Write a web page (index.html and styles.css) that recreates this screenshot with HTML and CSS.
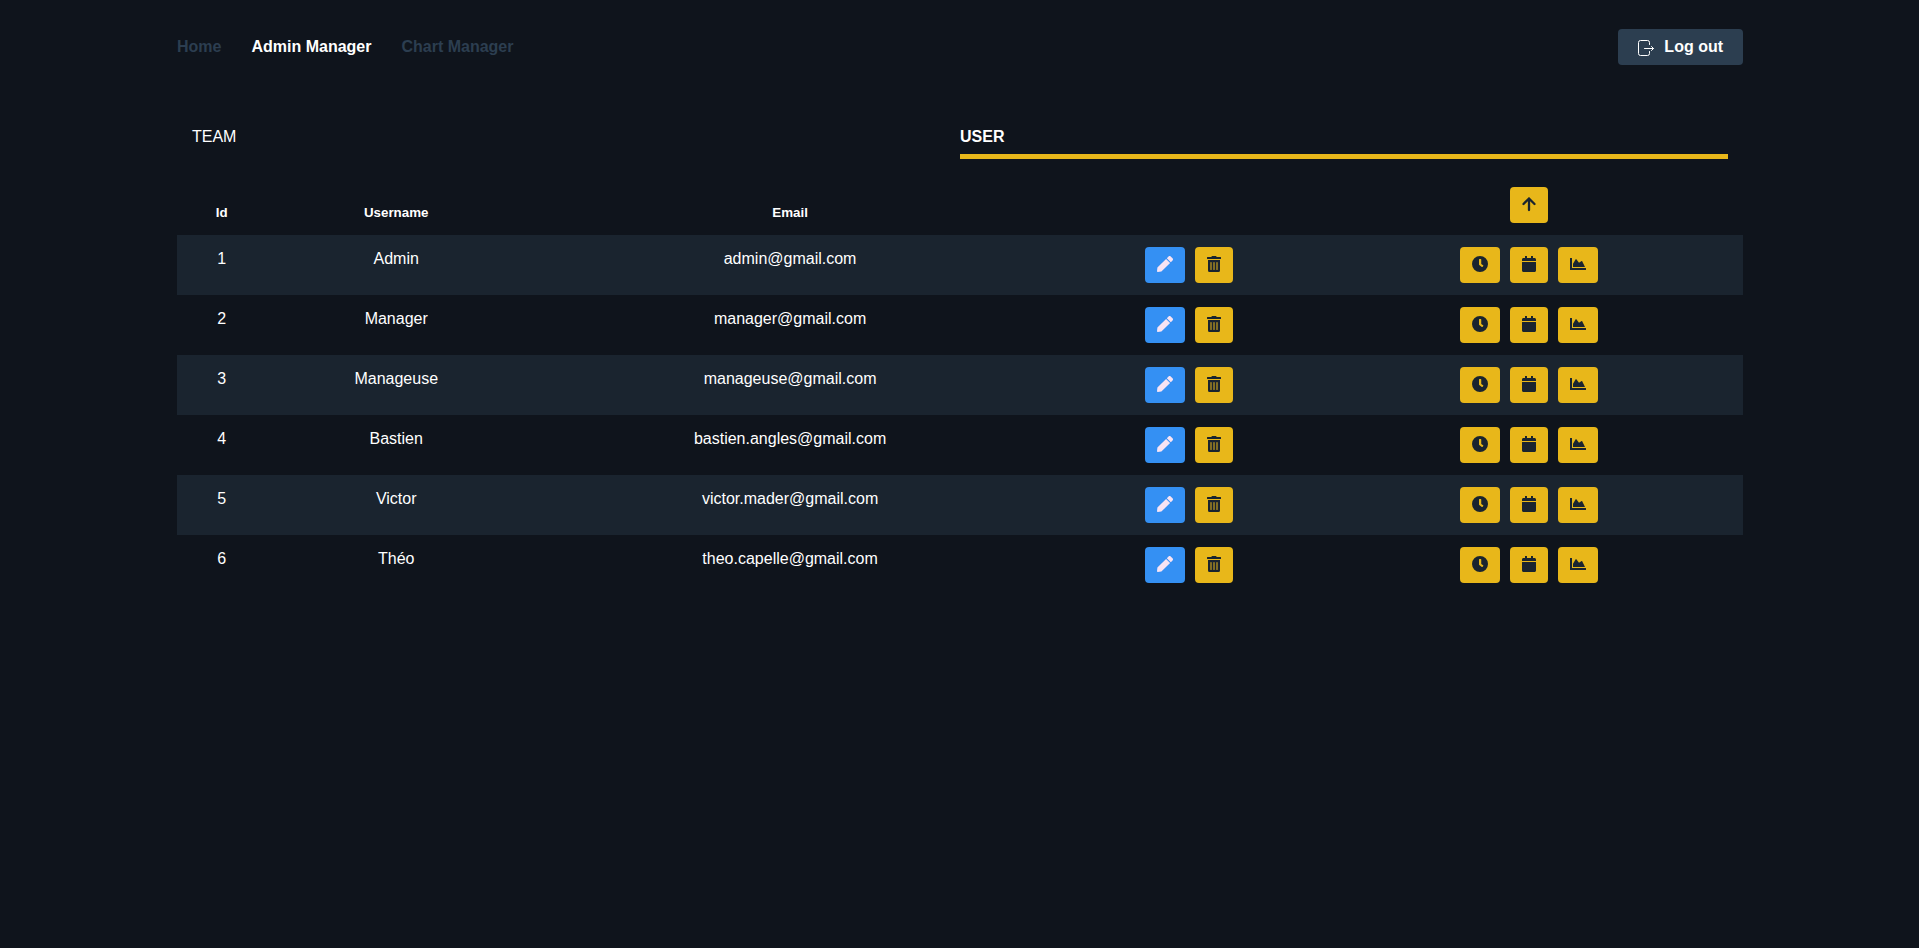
FILE: index.html
```html
<!DOCTYPE html>
<html lang="en">
<head>
<meta charset="utf-8">
<title>Admin Manager</title>
<link rel="stylesheet" href="styles.css">
</head>
<body>
<svg class="sprite" aria-hidden="true">
  <symbol id="i-pen" viewBox="0 0 512 512"><path d="M290.74 93.24l128.02 128.02-277.99 277.99-114.14 12.6C11.35 513.54-1.56 500.62.14 485.34l12.7-114.22 277.9-277.88zm207.2-19.06l-60.11-60.11c-18.75-18.75-49.16-18.75-67.91 0l-56.55 56.55 128.02 128.02 56.55-56.55c18.75-18.76 18.75-49.16 0-67.91z"/></symbol>
  <symbol id="i-trash" viewBox="0 0 448 512"><path d="M32 464a48 48 0 0 0 48 48h288a48 48 0 0 0 48-48V128H32zm272-256a16 16 0 0 1 32 0v224a16 16 0 0 1-32 0zm-96 0a16 16 0 0 1 32 0v224a16 16 0 0 1-32 0zm-96 0a16 16 0 0 1 32 0v224a16 16 0 0 1-32 0zM432 32H312l-9.4-18.7A24 24 0 0 0 281.1 0H166.8a23.72 23.72 0 0 0-21.4 13.3L136 32H16A16 16 0 0 0 0 48v32a16 16 0 0 0 16 16h416a16 16 0 0 0 16-16V48a16 16 0 0 0-16-16z"/></symbol>
  <symbol id="i-clock" viewBox="0 0 512 512"><path d="M256 0a256 256 0 1 1 0 512A256 256 0 1 1 256 0zM224 108V270c0 8 4 15 10 19l82 62c8 6 18 4 24-4l20-26c6-8 4-18-4-24L296 252V108c0-8-6-14-14-14h-44c-8 0-14 6-14 14z"/></symbol>
  <symbol id="i-calendar" viewBox="0 0 448 512"><path d="M12 192h424c6.6 0 12 5.4 12 12v260c0 26.5-21.5 48-48 48H48c-26.5 0-48-21.5-48-48V204c0-6.6 5.4-12 12-12zm436-44v-36c0-26.5-21.5-48-48-48h-48V12c0-6.6-5.4-12-12-12h-40c-6.6 0-12 5.4-12 12v52H160V12c0-6.6-5.4-12-12-12h-40c-6.6 0-12 5.4-12 12v52H48C21.5 64 0 85.5 0 112v36c0 6.6 5.4 12 12 12h424c6.6 0 12-5.4 12-12z"/></symbol>
  <symbol id="i-chart" viewBox="0 0 512 512"><path d="M500 384c6.6 0 12 5.4 12 12v40c0 6.6-5.4 12-12 12H12c-6.6 0-12-5.4-12-12V76c0-6.6 5.4-12 12-12h40c6.6 0 12 5.4 12 12v308h436zM372.7 159.5L288 216l-85.3-113.7c-5.1-6.8-15.5-6.3-19.9 1L96 248v104h384l-89.9-187.8c-3.2-6.5-11.4-8.7-17.4-4.7z"/></symbol>
  <symbol id="i-up" viewBox="0 0 14 16"><path d="M1.500 8L7 2.500L12.500 8M7 2.500V14" fill="none" stroke="currentColor" stroke-width="2.300" stroke-linecap="round" stroke-linejoin="round"/></symbol>
</svg>

<header class="topbar">
  <nav class="nav">
    <a href="#">Home</a>
    <a href="#" class="active">Admin Manager</a>
    <a href="#">Chart Manager</a>
  </nav>
  <button class="logout" type="button">
    <svg class="logout-icon" viewBox="0 0 16 16" aria-hidden="true"><path d="M11.500 4.500V2.500A2 2 0 0 0 9.500 .5H2.500A2 2 0 0 0 .5 2.500v11A2 2 0 0 0 2.500 15.500h7a2 2 0 0 0 2-2v-2M6.500 8.500h9M13.500 6.500l2 2-2 2"/></svg>
    <span>Log out</span>
  </button>
</header>

<main class="content">
  <div class="tabs" role="tablist">
    <button class="tab" type="button" role="tab" aria-selected="false">TEAM</button>
    <button class="tab selected" type="button" role="tab" aria-selected="true">USER</button>
  </div>

  <table class="users">
    <colgroup><col class="col-id"><col class="col-name"><col class="col-email"><col class="col-edit"><col class="col-links"></colgroup>
    <thead>
      <tr>
        <th scope="col">Id</th><th scope="col">Username</th><th scope="col">Email</th><td></td>
        <td class="links"><div class="actions"><button class="btn" type="button" aria-label="Promote"><svg class="narrow"><use href="#i-up"/></svg></button></div></td>
      </tr>
    </thead>
    <tbody id="rows"></tbody>
  </table>
</main>
<script src="app.js"></script>
</body>
</html>
```

FILE: styles.css
```css
* {
  box-sizing: border-box;
}

body {
  margin: 0;
  min-height: 100vh;
  padding: 29px 176px 0 177px;
  background: #0f141c;
  color: #fff;
  font: 16px/24px "Liberation Sans", Arial, sans-serif;
}

button {
  border: 0;
  color: inherit;
  font: inherit;
  cursor: pointer;
}

.sprite {
  display: none;
}

.topbar {
  display: flex;
  align-items: center;
  justify-content: space-between;
}

.nav {
  display: flex;
  gap: 30px;
  font-weight: 700;
}

.nav a {
  color: #2c3e50;
  text-decoration: none;
}

.nav .active {
  color: #fff;
}

.logout {
  display: flex;
  align-items: center;
  gap: 10px;
  height: 36px;
  padding: 0 20px;
  border-radius: 4px;
  background: #2c3e50;
  font-weight: 700;
}

.logout-icon {
  width: 16px;
  height: 16px;
  margin-top: 2px;
  fill: none;
  stroke: #fff;
  stroke-linecap: round;
  stroke-linejoin: round;
}

.tabs {
  display: flex;
  padding: 0 15px;
  margin-top: 60px;
}

.tab {
  flex: 1;
  padding: 0 0 5px;
  border-bottom: 5px solid transparent;
  background: none;
  text-align: left;
}

.tab.selected {
  border-color: #e8b71a;
  font-weight: 700;
}

.users {
  width: 100%;
  margin-top: 16px;
  border-collapse: collapse;
  table-layout: fixed;
  text-align: center;
}

.col-id { width: 5.7%; }
.col-name { width: 16.6%; }
.col-email { width: 33.7%; }
.col-edit { width: 17.3%; }

.users th {
  padding: 16px 0 0;
  font-size: smaller;
}

.users td {
  padding: 12px 0;
  vertical-align: top;
}

.users td.links {
  padding-right: 10px;
}

.users tbody tr:nth-child(odd) {
  background: #1a242f;
}

.actions {
  display: flex;
  justify-content: center;
  gap: 10px;
}

.btn {
  display: flex;
  align-items: center;
  height: 36px;
  padding: 0 12px;
  border-radius: 4px;
  background: #e8b71a;
  color: #1a242f;
}

.btn svg {
  width: 16px;
  height: 16px;
  margin-bottom: 2px;
  fill: currentColor;
}

.btn svg.narrow {
  width: 14px;
}

.btn.edit {
  background: #3490f3;
  color: #f7e3f3;
}
```

FILE: app.js
```js
const users = [
  ["Admin", "admin@gmail.com"],
  ["Manager", "manager@gmail.com"],
  ["Manageuse", "manageuse@gmail.com"],
  ["Bastien", "bastien.angles@gmail.com"],
  ["Victor", "victor.mader@gmail.com"],
  ["Théo", "theo.capelle@gmail.com"]
];

const button = (icon, label, cls = "", svgCls = "") =>
  `<button class="btn ${cls}" type="button" aria-label="${label}"><svg class="${svgCls}"><use href="#i-${icon}"/></svg></button>`;

document.getElementById("rows").innerHTML = users.map(([name, email], i) => `
  <tr>
    <td>${i + 1}</td><td>${name}</td><td>${email}</td>
    <td><div class="actions">${button("pen", "Edit", "edit")}${button("trash", "Delete", "", "narrow")}</div></td>
    <td class="links"><div class="actions">${button("clock", "Clock")}${button("calendar", "Calendar", "", "narrow")}${button("chart", "Charts")}</div></td>
  </tr>`).join("");
```
